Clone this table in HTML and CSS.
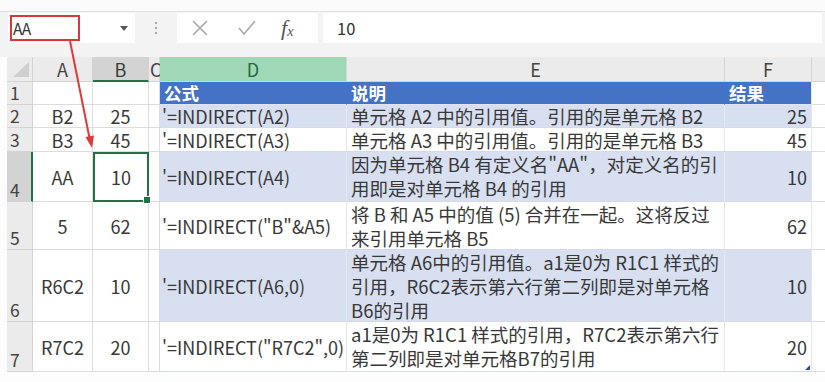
FILE: index.html
```html
<!DOCTYPE html>
<html lang="zh-CN">
<head>
<meta charset="utf-8">
<title>INDIRECT</title>
<link rel="stylesheet" href="styles.css">
</head>
<body>
<div class="page">
  <div class="topstrip"></div>
  <div class="toolbar">
    <div class="namebox">
      <span class="namebox-mark">AA</span>
      <svg class="dd" width="8" height="5" viewBox="0 0 8 5"><path d="M0 0 H8 L4 5 Z" fill="#555"/></svg>
    </div>
    <div class="grip">
      <svg width="4" height="14" viewBox="0 0 4 14"><circle cx="2" cy="2" r="1.2" fill="#aaa"/><circle cx="2" cy="7" r="1.2" fill="#aaa"/><circle cx="2" cy="12" r="1.2" fill="#aaa"/></svg>
    </div>
    <div class="fxbox">
      <svg width="18" height="18" viewBox="0 0 18 18"><path d="M2 2 L16 16 M16 2 L2 16" stroke="#a8a8a8" stroke-width="1.6" fill="none"/></svg>
      <svg width="20" height="18" viewBox="0 0 20 18"><path d="M2 9 L7 15 L18 2" stroke="#a8a8a8" stroke-width="1.6" fill="none"/></svg>
      <span class="fx">f<sub>x</sub></span>
    </div>
    <div class="formula">10</div>
  </div>

  <div class="sheet">
    <!-- header row -->
    <div class="corner"><svg width="16" height="15" viewBox="0 0 16 15"><path d="M16 0 V15 H0 Z" fill="#cfcfcf"/></svg></div>
    <div class="ch">A</div>
    <div class="ch ch-sel">B</div>
    <div class="ch ch-c">C</div>
    <div class="ch ch-d">D</div>
    <div class="ch">E</div>
    <div class="ch">F</div>
    <div class="ch ch-fill"></div>

    <!-- row 1 -->
    <div class="rh">1</div>
    <div class="c ctr"></div>
    <div class="c ctr"></div>
    <div class="c"></div>
    <div class="t th">公式</div>
    <div class="t th">说明</div>
    <div class="t th th-f">结果</div>
    <div class="c fill"></div>

    <!-- row 2 -->
    <div class="rh">2</div>
    <div class="c ctr">B2</div>
    <div class="c ctr">25</div>
    <div class="c"></div>
    <div class="t blue d">'=INDIRECT(A2)</div>
    <div class="t blue e e1">单元格 A2 中的引用值。引用的是单元格 B2</div>
    <div class="t blue f">25</div>
    <div class="c fill"></div>

    <!-- row 3 -->
    <div class="rh">3</div>
    <div class="c ctr">B3</div>
    <div class="c ctr">45</div>
    <div class="c"></div>
    <div class="t d">'=INDIRECT(A3)</div>
    <div class="t e e1">单元格 A3 中的引用值。引用的是单元格 B3</div>
    <div class="t f">45</div>
    <div class="c fill"></div>

    <!-- row 4 -->
    <div class="rh rh-sel">4</div>
    <div class="c ctr">AA</div>
    <div class="c ctr selcell">10</div>
    <div class="c"></div>
    <div class="t blue d">'=INDIRECT(A4)</div>
    <div class="t blue e">因为单元格 B4 有定义名"AA"，对定义名的引<br>用即是对单元格 B4 的引用</div>
    <div class="t blue f">10</div>
    <div class="c fill"></div>

    <!-- row 5 -->
    <div class="rh">5</div>
    <div class="c ctr">5</div>
    <div class="c ctr">62</div>
    <div class="c"></div>
    <div class="t d">'=INDIRECT("B"&amp;A5)</div>
    <div class="t e">将 B 和 A5 中的值 (5) 合并在一起。这将反过<br>来引用单元格 B5</div>
    <div class="t f">62</div>
    <div class="c fill"></div>

    <!-- row 6 -->
    <div class="rh">6</div>
    <div class="c ctr">R6C2</div>
    <div class="c ctr">10</div>
    <div class="c"></div>
    <div class="t blue d">'=INDIRECT(A6,0)</div>
    <div class="t blue e">单元格 A6中的引用值。a1是0为 R1C1 样式的<br>引用，R6C2表示第六行第二列即是对单元格<br>B6的引用</div>
    <div class="t blue f">10</div>
    <div class="c fill"></div>

    <!-- row 7 -->
    <div class="rh">7</div>
    <div class="c ctr">R7C2</div>
    <div class="c ctr">20</div>
    <div class="c"></div>
    <div class="t d">'=INDIRECT("R7C2",0)</div>
    <div class="t e">a1是0为 R1C1 样式的引用，R7C2表示第六行<br>第二列即是对单元格B7的引用</div>
    <div class="t f last">20</div>
    <div class="c fill"></div>
  </div>

  <svg class="arrow" width="825" height="382" viewBox="0 0 825 382">
    <line x1="70" y1="41" x2="89.5" y2="138" stroke="#e0393c" stroke-width="2"/>
    <path d="M92 148 L85.5 137 L94 135.5 Z" fill="#e0393c"/>
  </svg>
</div>
</body>
</html>
```
FILE: styles.css
```css
* { box-sizing: border-box; }
html, body { margin: 0; padding: 0; background: #fdfdfd; }
body {
  font-family: "Noto Sans CJK SC", "Noto Sans", sans-serif;
  color: #383838;
  width: 825px;
  height: 382px;
  overflow: hidden;
}
.page { position: relative; width: 825px; height: 382px; }

.topstrip { height: 12px; background: #fbfbfb; border-bottom: 1px solid #e2e2e2; }

.toolbar {
  height: 45px;
  background: #f3f3f3;
  display: flex;
  align-items: flex-start;
  padding-top: 1px;
}
.namebox {
  margin-left: 8px;
  width: 127px;
  height: 30px;
  background: #fff;
  display: flex;
  align-items: center;
  padding-left: 2px;
  padding-right: 7px;
  justify-content: space-between;
}
.namebox-mark {
  width: 70px;
  height: 26px;
  border: 2px solid #d9383a;
  font-size: 15.5px;
  line-height: 22px;
  padding-left: 1px;
  color: #333;
  letter-spacing: -0.5px;
}
.grip {
  width: 42px;
  height: 30px;
  display: flex;
  align-items: center;
  justify-content: center;
}
.fxbox {
  width: 141px;
  height: 30px;
  background: #fff;
  display: flex;
  align-items: center;
  padding-left: 14px;
  gap: 28px;
}
.fx {
  font-family: "Liberation Serif", serif;
  font-style: italic;
  font-size: 22px;
  line-height: 1;
  color: #555;
  margin-left: -4px;
}
.fx sub { font-size: 14px; vertical-align: -1px; }
.formula {
  margin-left: 5px;
  margin-right: 3px;
  flex: 1;
  height: 30px;
  background: #fff;
  font-size: 16.5px;
  line-height: 30px;
  padding-left: 14px;
  color: #333;
}

.sheet {
  margin-left: 7px;
  display: grid;
  grid-template-columns: 26px 60px 56px 11px 187px 378px 87px 13px;
  grid-template-rows: 25px 23px 23px 24px 50px 48px 72px 50px;
  background: #fff;
}
.corner, .ch, .rh {
  background: #ebebeb;
  color: #444;
  font-size: 18px;
  border-right: 1px solid #d4d4d4;
  border-bottom: 1px solid #d4d4d4;
}
.corner { display: flex; align-items: flex-end; justify-content: flex-end; padding: 0 3px 4px 0; }
.ch { display: flex; align-items: center; justify-content: center; line-height: 1; }
.ch-sel { background: #d3d3d3; border-bottom: 2px solid #217346; color: #3b3b3b; }
.ch-c { justify-content: flex-start; overflow: visible; padding-left: 1px; }
.ch-d { background: #a0d7b5; color: #1f6b40; border-right-color: #d4d4d4; }
.ch-fill { border-right: none; }
.rh {
  display: flex;
  align-items: flex-end;
  padding-left: 3px;
  line-height: 20px;
  padding-bottom: 1px;
  font-size: 17.5px;
}
.rh-sel { background: #d3d3d3; border-right: 2px solid #217346; }

.c {
  font-size: 18px;
  line-height: 20px;
  border-right: 1px solid #dcdcdc;
  border-bottom: 1px solid #dcdcdc;
  display: flex;
  align-items: center;
  white-space: nowrap;
}
.ctr { justify-content: center; }
.fill { border-right: none; }
.selcell {
  position: relative;
  border: 2px solid #217346;
}
.selcell::after {
  content: "";
  position: absolute;
  right: -4px;
  bottom: -4px;
  width: 6px;
  height: 6px;
  background: #217346;
  border: 1px solid #fff;
}

.t {
  font-size: 18px;
  line-height: 20px;
  border-bottom: 1px solid #d6dae4;
  border-right: 1px solid #e4e7ee;
  white-space: nowrap;
  background: #fff;
}
.blue { background: #d7dff1; }
.th {
  background: #4472c4;
  color: #fff;
  font-weight: bold;
  font-size: 17.5px;
  display: flex;
  align-items: center;
  padding-left: 4px;
  border-bottom-color: #dfe4ef;
  border-right-color: #4472c4;
}
.th-f { border-right: 1px solid #e4e7ee; }
.d { display: flex; align-items: center; padding-left: 2px; }
.e { font-size: 18.5px; line-height: 24px; padding: 0 0 0 4px; }
.e1 { display: flex; align-items: center; line-height: 20px; }
.f { display: flex; align-items: center; justify-content: flex-end; padding-right: 4px; }
.last { position: relative; }
.last::after {
  content: "";
  position: absolute;
  right: 1px;
  bottom: 1px;
  border-left: 5px solid transparent;
  border-bottom: 5px solid #2f4f9f;
}

.arrow { position: absolute; left: 0; top: 0; pointer-events: none; }
```
